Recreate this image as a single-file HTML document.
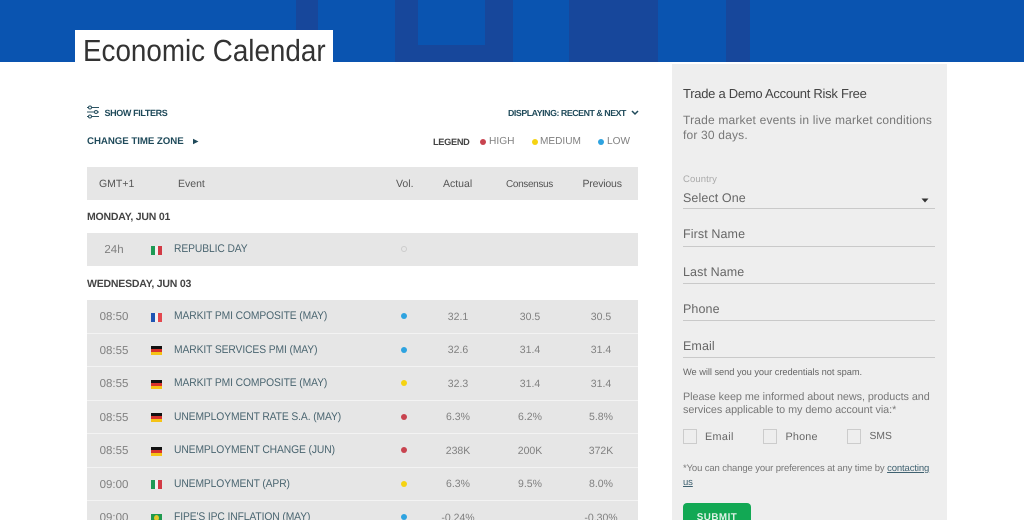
<!DOCTYPE html>
<html><head><meta charset="utf-8"><style>
html,body{margin:0;padding:0;background:#fff}
#p{position:relative;width:1024px;height:520px;overflow:hidden;background:#fff;font-family:"Liberation Sans",sans-serif;color:#666;text-rendering:geometricPrecision;filter:blur(.3px)}
#p div{position:absolute;white-space:nowrap}
.b{background:#17479b;top:0;height:62px}
.r{left:87px;width:551px;height:32.5px;background:#e6e6e6}
.tm{font-size:11.5px;color:#808080;width:60px;left:84px;text-align:center;line-height:14px;margin-top:1px}
.ev{left:174px;font-size:10.3px;color:#4a6570;line-height:14px;letter-spacing:-.1px;margin-top:.5px;transform:scaleY(1.08)}
.c{font-size:10.5px;color:#808080;width:70px;text-align:center;line-height:14px;margin-top:.5px}
.d{width:6px;height:6px;border-radius:50%;left:401px}
.h{font-size:10.5px;color:#555;line-height:14px;top:177px}
.day{left:87px;font-size:10.5px;font-weight:bold;color:#444;line-height:14px;letter-spacing:-.2px}
.f{left:151px;width:11px;height:9px}
.f i{position:absolute;display:block;top:0;height:9px}
.it{background:linear-gradient(90deg,#1e9a55 0 4px,#f2f2f2 4px 7px,#d23a45 7px)}
.fr{background:linear-gradient(90deg,#1f55b4 0 4px,#f2f2f2 4px 7px,#e4484f 7px)}
.de{background:linear-gradient(180deg,#111 0 3px,#d8332c 3px 6px,#f5c316 6px)}
.lab{left:683px;font-size:12.5px;color:#666;letter-spacing:.1px;line-height:16px}
.ln{left:683px;width:252px;height:1px;background:#c9c9c9}
.cb{width:12px;height:13px;border:1px solid #ccc;background:#eee;top:429px}
.bl{font-weight:bold;color:#1f4a5a}
</style></head><body><div id="p">
<div style="left:0;top:0;width:1024px;height:62px;background:#0a54b0"></div>
<div class="b" style="left:296px;width:22px"></div>
<div class="b" style="left:395px;width:23px"></div>
<div class="b" style="left:418px;top:45px;width:67px;height:17px"></div>
<div class="b" style="left:485px;width:28px"></div>
<div class="b" style="left:569px;width:89px"></div>
<div class="b" style="left:726px;width:24px"></div>
<div style="left:75px;top:30px;width:258px;height:32px;background:#fff"></div>
<div style="left:83px;top:34.3px;font-size:27.8px;line-height:36px;color:#333;transform:scaleY(1.1);transform-origin:0 27.7px">Economic Calendar</div>

<svg style="position:absolute;left:86px;top:105px" width="14" height="14" viewBox="0 0 14 14" fill="none" stroke="#2c5362" stroke-width="1"><path d="M1 2.5H13M1 7H13M1 11.5H13"/><circle cx="4" cy="2.5" r="1.5" fill="#fff"/><circle cx="10" cy="7" r="1.5" fill="#fff"/><circle cx="4" cy="11.5" r="1.5" fill="#fff"/></svg>
<div class="bl" style="left:104.5px;top:106px;font-size:9px;line-height:14px;letter-spacing:-.37px">SHOW FILTERS</div>
<div class="bl" style="left:87px;top:135px;font-size:9.7px;line-height:14px;letter-spacing:-.05px">CHANGE TIME ZONE</div>
<svg style="position:absolute;left:192px;top:138px" width="7" height="7" viewBox="0 0 7 7"><path d="M1 .8L6.5 3.5L1 6.2Z" fill="#1f4a5a"/></svg>
<div class="bl" style="left:508px;top:106px;font-size:8.8px;line-height:14px;letter-spacing:-.45px">DISPLAYING: RECENT &amp; NEXT</div>
<svg style="position:absolute;left:631px;top:110px" width="8" height="6" viewBox="0 0 8 6" fill="none" stroke="#1f4a5a" stroke-width="1.5"><path d="M1 1L4 4L7 1"/></svg>

<div style="left:433px;top:134.5px;font-size:9.2px;font-weight:bold;color:#444;line-height:14px;letter-spacing:-.3px">LEGEND</div>
<div class="d" style="left:480px;top:138.5px;background:#c8434f"></div>
<div style="left:489px;top:135px;font-size:10.2px;color:#808080;line-height:14px">HIGH</div>
<div class="d" style="left:532px;top:138.5px;background:#f5d312"></div>
<div style="left:540px;top:135px;font-size:10.1px;color:#808080;line-height:14px">MEDIUM</div>
<div class="d" style="left:598px;top:138.5px;background:#2ea3e0"></div>
<div style="left:607px;top:135px;font-size:10.1px;color:#808080;line-height:14px">LOW</div>

<div class="r" style="top:167px;height:33px"></div>
<div class="h" style="left:99px">GMT+1</div>
<div class="h" style="left:178px">Event</div>
<div class="h" style="left:396px">Vol.</div>
<div class="h" style="left:443px">Actual</div>
<div class="h" style="left:506px;font-size:10px;letter-spacing:-.35px;top:177.5px">Consensus</div>
<div class="h" style="left:582.5px;letter-spacing:-.2px">Previous</div>

<div class="day" style="top:210px">MONDAY, JUN 01</div>
<div class="r" style="top:233px;height:33px"></div>
<div class="tm" style="top:242px">24h</div>
<div class="f it" style="top:246px"></div>
<div class="ev" style="top:242.5px">REPUBLIC DAY</div>
<div style="left:401px;top:246px;width:4px;height:4px;border:1px solid #ccc;border-radius:50%"></div>

<div class="day" style="top:277px">WEDNESDAY, JUN 03</div>

<div style="left:87px;top:300px;width:551px;height:220px;background:#f3f3f3"></div>
<div class="r" style="top:300px"></div>
<div class="tm" style="top:309px">08:50</div>
<div class="f fr" style="top:313px"></div>
<div class="ev" style="top:309.5px">MARKIT PMI COMPOSITE (MAY)</div>
<div class="d" style="top:313px;background:#2ea3e0"></div>
<div class="c" style="left:423px;top:309px">32.1</div><div class="c" style="left:495px;top:309px">30.5</div><div class="c" style="left:566px;top:309px">30.5</div>

<div class="r" style="top:333.5px"></div>
<div class="tm" style="top:342.5px">08:55</div>
<div class="f de" style="top:346px"></div>
<div class="ev" style="top:343px">MARKIT SERVICES PMI (MAY)</div>
<div class="d" style="top:346.5px;background:#2ea3e0"></div>
<div class="c" style="left:423px;top:342.5px">32.6</div><div class="c" style="left:495px;top:342.5px">31.4</div><div class="c" style="left:566px;top:342.5px">31.4</div>

<div class="r" style="top:367px"></div>
<div class="tm" style="top:376px">08:55</div>
<div class="f de" style="top:380px"></div>
<div class="ev" style="top:376.5px">MARKIT PMI COMPOSITE (MAY)</div>
<div class="d" style="top:380px;background:#f5d312"></div>
<div class="c" style="left:423px;top:376px">32.3</div><div class="c" style="left:495px;top:376px">31.4</div><div class="c" style="left:566px;top:376px">31.4</div>

<div class="r" style="top:400.5px"></div>
<div class="tm" style="top:409.5px">08:55</div>
<div class="f de" style="top:413px"></div>
<div class="ev" style="top:410px">UNEMPLOYMENT RATE S.A. (MAY)</div>
<div class="d" style="top:413.5px;background:#c8434f"></div>
<div class="c" style="left:423px;top:409.5px">6.3%</div><div class="c" style="left:495px;top:409.5px">6.2%</div><div class="c" style="left:566px;top:409.5px">5.8%</div>

<div class="r" style="top:434px"></div>
<div class="tm" style="top:443px">08:55</div>
<div class="f de" style="top:447px"></div>
<div class="ev" style="top:443.5px">UNEMPLOYMENT CHANGE (JUN)</div>
<div class="d" style="top:447px;background:#c8434f"></div>
<div class="c" style="left:423px;top:443px">238K</div><div class="c" style="left:495px;top:443px">200K</div><div class="c" style="left:566px;top:443px">372K</div>

<div class="r" style="top:467.5px"></div>
<div class="tm" style="top:476.5px">09:00</div>
<div class="f it" style="top:480px"></div>
<div class="ev" style="top:477px">UNEMPLOYMENT (APR)</div>
<div class="d" style="top:480.5px;background:#f5d312"></div>
<div class="c" style="left:423px;top:476.5px">6.3%</div><div class="c" style="left:495px;top:476.5px">9.5%</div><div class="c" style="left:566px;top:476.5px">8.0%</div>

<div class="r" style="top:501px;height:19px"></div>
<div class="tm" style="top:510px">09:00</div>
<div class="f" style="top:514px;background:#1f9a4e"><i style="left:3px;top:1px;width:5px;height:6px;background:#e3c92a;border-radius:50%"></i></div>
<div class="ev" style="top:510px">FIPE'S IPC INFLATION (MAY)</div>
<div class="d" style="top:514px;background:#2ea3e0"></div>
<div class="c" style="left:423px;top:510px">-0.24%</div><div class="c" style="left:566px;top:510px">-0.30%</div>

<div style="left:672px;top:64px;width:275px;height:456px;background:#eeeeee"></div>
<div style="left:683px;top:86px;font-size:13px;color:#444;line-height:16px;letter-spacing:-.27px">Trade a Demo Account Risk Free</div>
<div style="left:683px;top:113px;font-size:12px;color:#777;line-height:14.5px;letter-spacing:.18px">Trade market events in live market conditions<br>for 30 days.</div>
<div style="left:683px;top:174px;font-size:9.5px;color:#aaa;line-height:12px;letter-spacing:.1px">Country</div>
<div class="lab" style="top:189.5px">Select One</div>
<svg style="position:absolute;left:921px;top:198px" width="8" height="5" viewBox="0 0 8 5"><path d="M.5 .5H7.5L4 4.5Z" fill="#333"/></svg>
<div class="ln" style="top:208px"></div>
<div class="lab" style="top:226px">First Name</div><div class="ln" style="top:246px"></div>
<div class="lab" style="top:263.5px">Last Name</div><div class="ln" style="top:283px"></div>
<div class="lab" style="top:301px">Phone</div><div class="ln" style="top:320px"></div>
<div class="lab" style="top:338px">Email</div><div class="ln" style="top:357px"></div>
<div style="left:683px;top:366px;font-size:9.3px;color:#666;line-height:12px;letter-spacing:-.05px">We will send you your credentials not spam.</div>
<div style="left:683px;top:391px;font-size:10.8px;color:#777;line-height:13px;letter-spacing:-.05px">Please keep me informed about news, products and<br>services applicable to my demo account via:*</div>
<div class="cb" style="left:683px"></div>
<div style="left:705px;top:429.5px;font-size:10.8px;color:#666;line-height:14px;letter-spacing:.35px">Email</div>
<div class="cb" style="left:763px"></div>
<div style="left:785.5px;top:429.5px;font-size:10.8px;color:#666;line-height:14px;letter-spacing:.2px">Phone</div>
<div class="cb" style="left:847px"></div>
<div style="left:869.5px;top:429.5px;font-size:10.3px;color:#666;line-height:14px">SMS</div>
<div style="left:683px;top:462px;font-size:9.5px;color:#777;line-height:13.5px;letter-spacing:-.12px">*You can change your preferences at any time by <span style="text-decoration:underline;color:#3f6170">contacting</span><br><span style="text-decoration:underline;color:#3f6170">us</span></div>
<div style="left:683px;top:503px;width:68px;height:24px;background:#12a854;border-radius:4px"></div>
<div style="left:683px;top:511px;width:68px;text-align:center;font-size:9.8px;font-weight:bold;color:#dff3e7;line-height:14px;letter-spacing:.5px">SUBMIT</div>
</div></body></html>
